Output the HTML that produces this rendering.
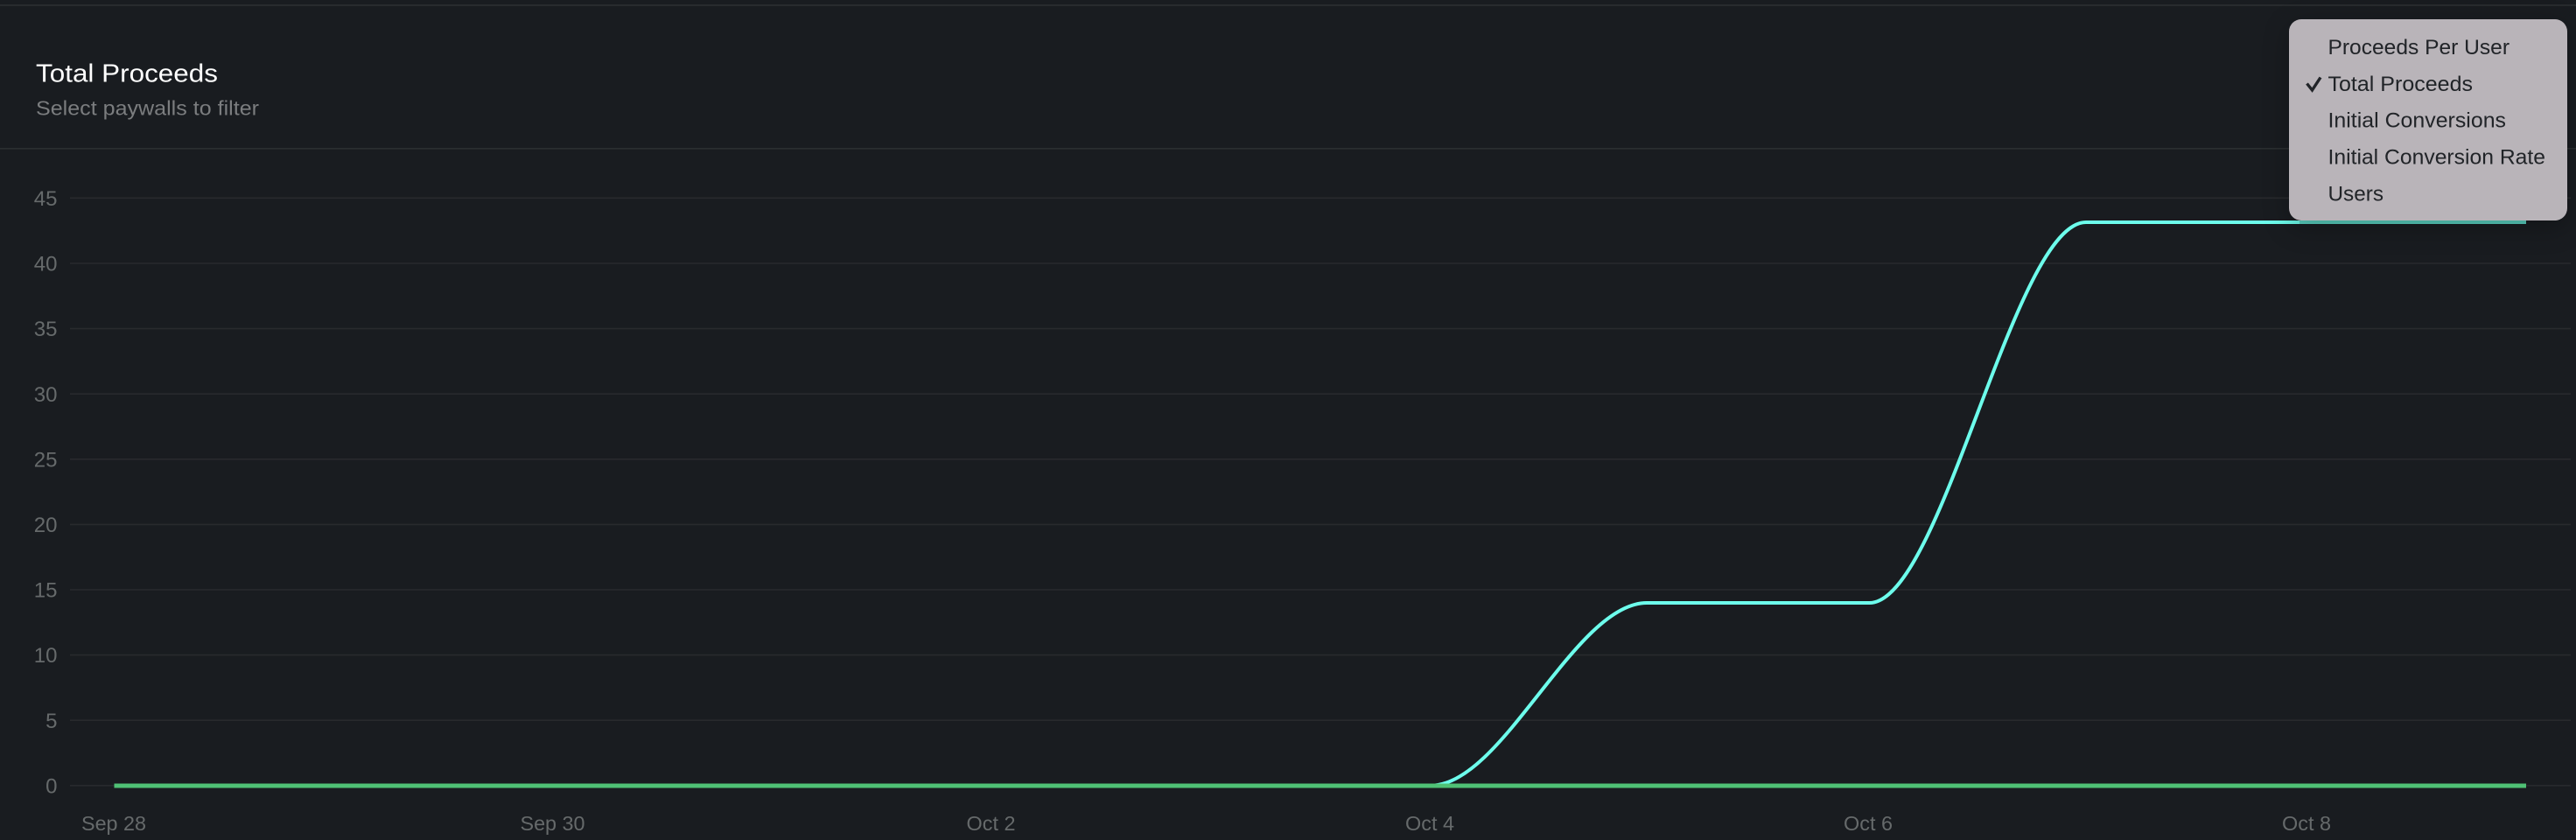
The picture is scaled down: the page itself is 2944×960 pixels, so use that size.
<!DOCTYPE html>
<html lang="en">
<head>
<meta charset="utf-8">
<title>Total Proceeds</title>
<style>
html,body{margin:0;padding:0;width:2944px;height:960px;overflow:hidden;background:#191c20}
svg{display:block;position:absolute;left:0;top:0}
text{font-family:"Liberation Sans",sans-serif}
.y{font-size:24px;fill:#666a6b;text-anchor:end}
.x{font-size:23px;fill:#666a6b}
.m{font-size:24px;fill:#212428}
#menu{position:absolute;left:2616px;top:22px;width:318px;height:230px;border-radius:14px;background:#b9b4b9;box-shadow:0 8px 30px rgba(0,0,0,.28)}
</style>
</head>
<body>
<svg width="2944" height="960" viewBox="0 0 2944 960">
  <rect x="0" y="5" width="2944" height="2" fill="#282b2e"/>
  <rect x="0" y="169" width="2944" height="1.6" fill="#2b2f31"/>
  <text x="41" y="93.7" font-size="28.5" fill="#ffffff" textLength="208" lengthAdjust="spacingAndGlyphs">Total Proceeds</text>
  <text x="41" y="131.7" font-size="23.5" fill="#7b7d7f" textLength="255" lengthAdjust="spacingAndGlyphs">Select paywalls to filter</text>

  <g stroke="#282a2d" stroke-width="1.6">
    <line x1="80" x2="2938" y1="226.3" y2="226.3"/>
    <line x1="80" x2="2938" y1="301" y2="301"/>
    <line x1="80" x2="2938" y1="375.6" y2="375.6"/>
    <line x1="80" x2="2938" y1="450.2" y2="450.2"/>
    <line x1="80" x2="2938" y1="524.8" y2="524.8"/>
    <line x1="80" x2="2938" y1="599.4" y2="599.4"/>
    <line x1="80" x2="2938" y1="674" y2="674"/>
    <line x1="80" x2="2938" y1="748.6" y2="748.6"/>
    <line x1="80" x2="2938" y1="823.2" y2="823.2"/>
    <line x1="80" x2="2938" y1="897.8" y2="897.8"/>
  </g>

  <text class="y" x="65.5" y="235">45</text>
  <text class="y" x="65.5" y="309.6">40</text>
  <text class="y" x="65.5" y="384.2">35</text>
  <text class="y" x="65.5" y="458.8">30</text>
  <text class="y" x="65.5" y="533.4">25</text>
  <text class="y" x="65.5" y="608">20</text>
  <text class="y" x="65.5" y="682.6">15</text>
  <text class="y" x="65.5" y="757.2">10</text>
  <text class="y" x="65.5" y="831.8">5</text>
  <text class="y" x="65.5" y="906.4">0</text>

  <text class="x" x="93" y="949" textLength="74" lengthAdjust="spacingAndGlyphs">Sep 28</text>
  <text class="x" x="594.5" y="949" textLength="74" lengthAdjust="spacingAndGlyphs">Sep 30</text>
  <text class="x" x="1104.5" y="949" textLength="56" lengthAdjust="spacingAndGlyphs">Oct 2</text>
  <text class="x" x="1606" y="949" textLength="56" lengthAdjust="spacingAndGlyphs">Oct 4</text>
  <text class="x" x="2107" y="949" textLength="56" lengthAdjust="spacingAndGlyphs">Oct 6</text>
  <text class="x" x="2608" y="949" textLength="56" lengthAdjust="spacingAndGlyphs">Oct 8</text>

  <path d="M1635 897.8 C1717.3 897.8 1799.7 689 1882 689 L2136.5 689 C2219 689 2301.5 254 2384 254 L2887 254" fill="none" stroke="#6dfdec" stroke-width="4"/>
  <rect x="2628" y="252" width="259" height="4" fill="#5ad2c2"/>
  <rect x="130.5" y="895.5" width="2756.5" height="5" fill="#4fc175"/>
</svg>

<div id="menu"></div>

<svg width="2944" height="960" viewBox="0 0 2944 960">
  <text class="m" x="2660.5" y="62" textLength="207.5" lengthAdjust="spacingAndGlyphs">Proceeds Per User</text>
  <path d="M2636.5 95.5 L2642.5 103 L2652 88.5" fill="none" stroke="#212428" stroke-width="3.4"/>
  <text class="m" x="2660.5" y="104" textLength="165.5" lengthAdjust="spacingAndGlyphs">Total Proceeds</text>
  <text class="m" x="2660.5" y="145.7" textLength="203.5" lengthAdjust="spacingAndGlyphs">Initial Conversions</text>
  <text class="m" x="2660.5" y="187.7" textLength="248.5" lengthAdjust="spacingAndGlyphs">Initial Conversion Rate</text>
  <text class="m" x="2660.5" y="229.3" textLength="63.5" lengthAdjust="spacingAndGlyphs">Users</text>
</svg>
</body>
</html>
